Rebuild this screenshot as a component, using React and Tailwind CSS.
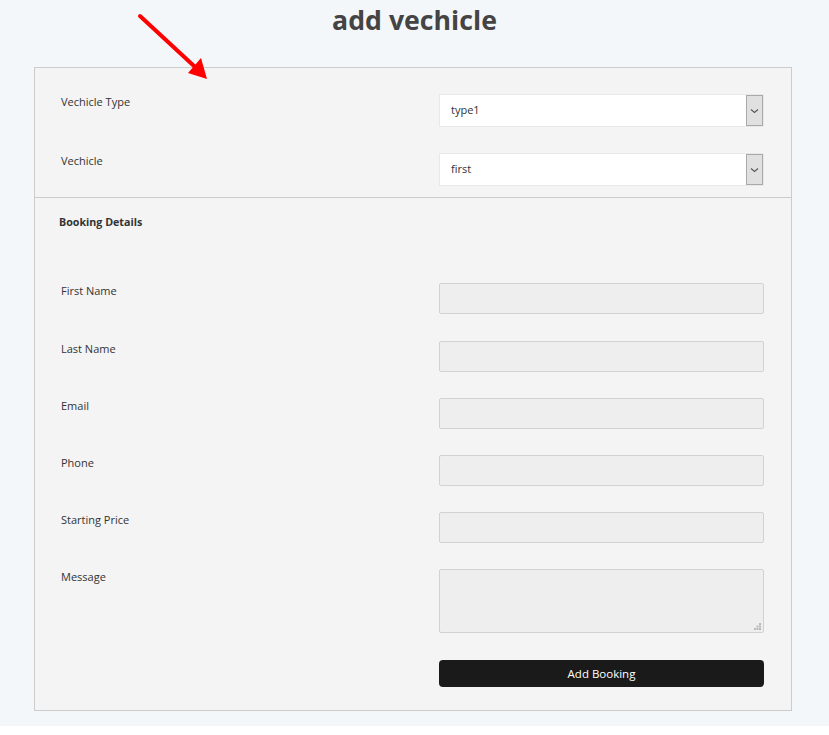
export default function App() {
  const fields = [
    { label: "First Name", gap: "mt-0" },
    { label: "Last Name", gap: "mt-[27px]" },
    { label: "Email", gap: "mt-[26px]" },
    { label: "Phone", gap: "mt-[26px]" },
    { label: "Starting Price", gap: "mt-[26px]" },
  ];
  return (
    <div className="relative bg-white font-['Open_Sans',sans-serif] text-[#333]">
      <div className="h-[726px] bg-[#f4f7fa] pt-0">
        <h1 className="h-[67px] text-center text-[26.7px] font-bold leading-[40px] text-[#444]">
          add vechicle
        </h1>
        <div className="ml-[34px] w-[758px] border border-[#cccccc] bg-[#f4f4f4]">
          <div className="pl-[26px] pr-[27px] pt-[26px]">
            <div className="flex h-[59px] items-start justify-between">
              <div className="text-[11px] leading-[16px]">Vechicle Type</div>
              <Select value="type1" />
            </div>
            <div className="flex h-[44px] items-start justify-between">
              <div className="text-[11px] leading-[16px]">Vechicle</div>
              <Select value="first" />
            </div>
          </div>
          <div className="border-t border-[#cccccc] px-[24px] pt-[16px]">
            <div className="text-[10.7px] font-bold leading-[17px]">Booking Details</div>
          </div>
          <div className="flex flex-col pl-[26px] pr-[27px] pt-[52px]">
            {fields.map((f) => (
              <div key={f.label} className={`flex items-start justify-between ${f.gap}`}>
                <div className="text-[11px] leading-[16px]">{f.label}</div>
                <div className="h-[31px] w-[325px] rounded-[2px] border border-[#d2d2d6] bg-[#eeeeee]" />
              </div>
            ))}
            <div className="mt-[26px] flex items-start justify-between">
              <div className="text-[11px] leading-[16px]">Message</div>
              <div className="relative h-[64px] w-[325px] rounded-[2px] border border-[#d2d2d6] bg-[#eeeeee]">
                <svg className="absolute bottom-[2px] right-[2px]" width="7" height="7" viewBox="0 0 7 7">
                  <rect x="5" y="0" width="2" height="2" fill="#b8b8b8" />
                  <rect x="2.5" y="2.5" width="2" height="2" fill="#b8b8b8" />
                  <rect x="5" y="2.5" width="2" height="2" fill="#b8b8b8" />
                  <rect x="0" y="5" width="2" height="2" fill="#b8b8b8" />
                  <rect x="2.5" y="5" width="2" height="2" fill="#b8b8b8" />
                  <rect x="5" y="5" width="2" height="2" fill="#b8b8b8" />
                </svg>
              </div>
            </div>
          </div>
          <div className="flex justify-end pl-[26px] pr-[27px] pb-[23px] pt-[27px]">
            <button className="h-[27px] w-[325px] rounded-[4px] bg-[#1a1a1a] text-[11.5px] leading-[27px] text-white">
              Add Booking
            </button>
          </div>
        </div>
      </div>
      <svg
        className="absolute left-0 top-0"
        width="230"
        height="90"
        viewBox="0 0 230 90"
      >
        <line x1="140" y1="16" x2="194" y2="66" stroke="#ff0000" strokeWidth="4" strokeLinecap="round" />
        <polygon points="207,79 188,73 201,58" fill="#ff0000" />
      </svg>
    </div>
  );
}

function Select({ value }) {
  return (
    <div className="flex h-[33px] w-[325px] items-stretch border border-[#e8e8e8] bg-white">
      <div className="flex flex-1 items-center pl-[11px] text-[11px] text-[#333]">{value}</div>
      <div className="flex w-[17px] items-center justify-center border border-[#a9a9a9] bg-[#e0e0e0]">
        <svg width="9" height="6" viewBox="0 0 9 6">
          <path d="M1 1.5 L4.5 4.5 L8 1.5" fill="none" stroke="#555" strokeWidth="1.1" />
        </svg>
      </div>
    </div>
  );
}
